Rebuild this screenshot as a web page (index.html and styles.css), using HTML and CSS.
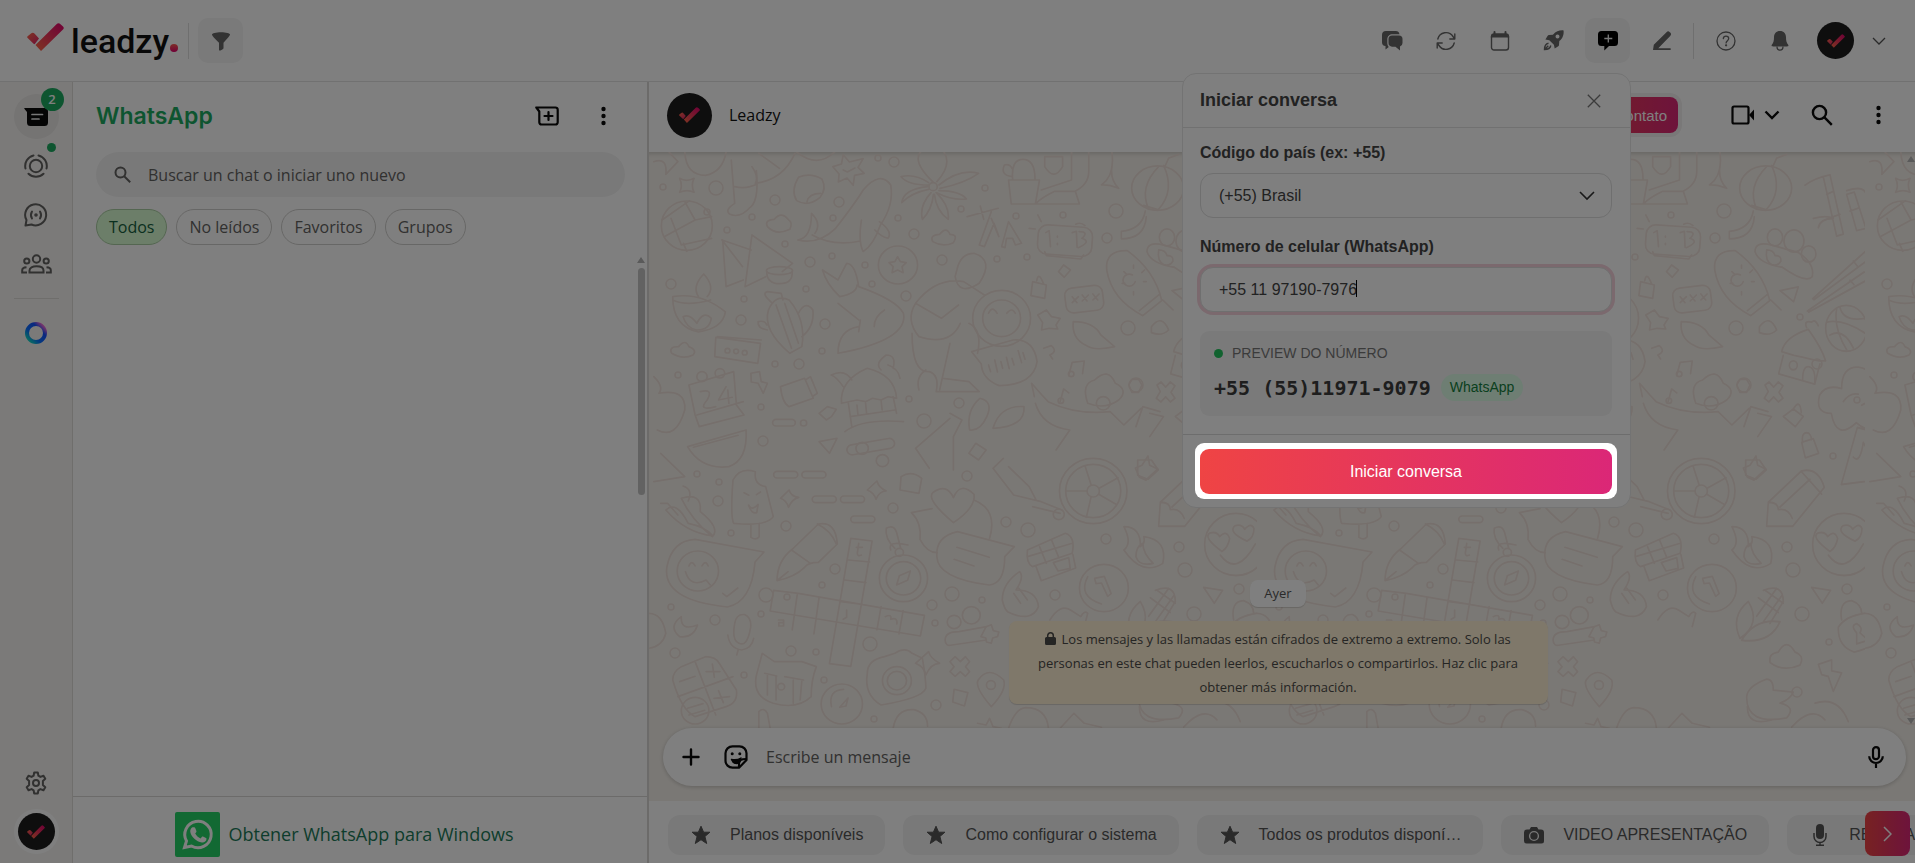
FILE: index.html
```html
<!DOCTYPE html>
<html lang="pt-BR">
<head>
    <meta charset="UTF-8">
    <meta name="viewport" content="width=device-width, initial-scale=1.0">
    <title>Leadzy</title>
    <link rel="stylesheet" href="styles.css">
</head>
<body>
    <!-- Shared shapes -->
    <svg class="defs" aria-hidden="true">
        <defs>
            <linearGradient id="brand" x1="0" y1="1" x2="1" y2="0">
                <stop offset="0" stop-color="#ff6a45"/>
                <stop offset="1" stop-color="#e0006e"/>
            </linearGradient>
            <linearGradient id="brand-short" x1="0" y1="0" x2="1" y2="1">
                <stop offset="0" stop-color="#ff6a45"/>
                <stop offset="1" stop-color="#e0206e"/>
            </linearGradient>
            <linearGradient id="meta" x1="0" y1="1" x2="1" y2="0">
                <stop offset="0.100" stop-color="#12d0c8"/>
                <stop offset="0.350" stop-color="#0a72ff"/>
                <stop offset="0.700" stop-color="#1450ff"/>
                <stop offset="0.900" stop-color="#e868d8"/>
            </linearGradient>
            <symbol id="check" viewBox="0 0 37 28">
                <path fill="url(#brand)" d="M8.500 22 29.500 1.200q2-2 4 0l2.500 2.300q1.500 1.500 0 3L14 28Z"/>
                <path fill="url(#brand-short)" d="M.6 13.200 4 10.400q2-1.400 3.700.3L12 15.600 8 20.800q-.6.800-1.400 0L.4 14.700q-.6-.8.200-1.500Z"/>
            </symbol>
        </defs>
    </svg>

    <header class="topbar">
        <div class="brand">
            <svg class="brand-check" width="37" height="28"><use href="#check"/></svg>
            <span class="brand-name">leadzy</span>
            <span class="brand-dot"></span>
        </div>
        <span class="divider"></span>
        <button class="tool tool-active" aria-label="Filtro">
            <svg width="20" height="20" viewBox="0 0 20 20"><path fill="currentColor" d="M1 3.500C1 2.200 5 1.200 10 1.200s9 1 9 2.300c0 1.200-2 3.300-6.500 8.200V17c0 .6-.3 1-.8 1.300l-2.200 1.200c-.8.400-1.500 0-1.500-.9v-6.900C3 6.800 1 4.700 1 3.500Z"/></svg>
        </button>

        <nav class="tools">
            <button class="tool" aria-label="Conversas">
                <svg width="22" height="20" viewBox="0 0 22 20"><path fill="currentColor" d="M5 0h9.500A4 4 0 0 1 18.500 3.200h-7c-3 0-5.200 2-5.200 5V12c0 1.500.5 3 1.500 4L4.500 18.500V15A3.700 3.700 0 0 1 1 11.300V4a4 4 0 0 1 4-4Z"/><path fill="currentColor" d="M11 4.600h7a3.500 3.500 0 0 1 3.500 3.500V12a3.500 3.500 0 0 1-2.500 3.400V19.500l-4.500-3.800H11A3.500 3.500 0 0 1 7.500 12V8.100A3.500 3.500 0 0 1 11 4.600Z"/></svg>
            </button>
            <button class="tool" aria-label="Sincronizar">
                <svg width="20" height="20" viewBox="0 0 20 20" fill="none" stroke="currentColor" stroke-width="1.400" stroke-linecap="round" stroke-linejoin="round"><path d="M1.800 8A8.400 8.400 0 0 1 17 5.500l1.600 2.300M18.800 3v5h-5M18.200 12A8.400 8.400 0 0 1 3 14.500l-1.600-2.300M1.200 17v-5h5"/></svg>
            </button>
            <button class="tool" aria-label="Agenda">
                <svg width="20" height="20" viewBox="0 0 20 20"><path fill="currentColor" d="M4.500 0a1 1 0 0 1 1 1v1.200h9V1a1 1 0 0 1 2 0v1.200A3 3 0 0 1 19.200 5v1.500H.8V5a3 3 0 0 1 2.700-2.800V1a1 1 0 0 1 1-1Z"/><rect x="1.500" y="4" width="17" height="15" rx="2.500" fill="none" stroke="currentColor" stroke-width="1.400"/></svg>
            </button>
            <button class="tool" aria-label="Campanhas">
                <svg width="21" height="21" viewBox="0 0 21 21"><path fill="currentColor" fill-rule="evenodd" d="M20.600.4c.3 4-.5 7.300-4.300 10.700l-.3 4c0 .5-.3.900-.7 1.200l-3.600 2.300-.8-3.900-4.600-4.500-3.900-.7 2.300-3.700c.3-.4.700-.7 1.200-.7l4-.3C13.300.9 16.600.1 20.600.4ZM14.500 4.500a2 2 0 1 0 0 4 2 2 0 0 0 0-4Z"/><path fill="none" stroke="currentColor" stroke-width="1.400" d="M5.500 13.200c-3 .6-4 3-4 6.300 3.300 0 5.700-1 6.300-4M1.500 19.500l3.800-3.800"/></svg>
            </button>
            <button class="tool tool-active tool-dark" aria-label="Iniciar conversa" aria-expanded="true">
                <svg width="22" height="20" viewBox="0 0 22 20"><path fill="currentColor" d="M4.500 0h13A3.500 3.500 0 0 1 21 3.500v8a3.500 3.500 0 0 1-3.500 3.500H12l-4.700 4.500V15H4.500A3.500 3.500 0 0 1 1 11.500v-8A3.500 3.500 0 0 1 4.500 0Z"/><path stroke="#f2f2f2" stroke-width="1.300" d="M11.300 3.500v8M7.300 7.500h8"/></svg>
            </button>
            <button class="tool" aria-label="Assinatura">
                <svg width="20" height="20" viewBox="0 0 20 20"><path fill="currentColor" d="m1 19 .8-5.200L14.500 1.200a2.300 2.300 0 0 1 3.300 0l.4.400a2.300 2.300 0 0 1 0 3.300L6.300 17.200H18a.9.9 0 0 1 0 1.800Z"/></svg>
            </button>
            <span class="divider"></span>
            <button class="tool" aria-label="Ajuda">
                <svg width="20" height="20" viewBox="0 0 20 20" fill="none" stroke="currentColor" stroke-width="1.300"><circle cx="10" cy="10" r="9"/><path stroke-linecap="round" d="M7.300 7.600C7.400 6 8.600 5.200 10 5.200c1.500 0 2.700.9 2.700 2.400 0 2-2.600 2.100-2.600 4.300"/><circle cx="10.100" cy="14.300" r=".5" fill="currentColor"/></svg>
            </button>
            <button class="tool" aria-label="Notificações">
                <svg width="20" height="20" viewBox="0 0 20 20"><path fill="currentColor" d="M10 0c3.800 0 6 2.700 6 6.200 0 4 .7 5.700 2 7.300.9 1.100.3 1.900-1 1.900H3c-1.300 0-1.900-.8-1-1.900 1.300-1.600 2-3.300 2-7.300C4 2.700 6.200 0 10 0Z"/><path fill="none" stroke="currentColor" stroke-width="1.300" d="M7 15.500c0 2.200 1.200 3.700 3 3.700s3-1.500 3-3.700"/></svg>
            </button>
            <button class="account" aria-label="Conta">
                <span class="avatar avatar-sm"><svg width="18" height="14"><use href="#check"/></svg></span>
                <svg width="14" height="8" viewBox="0 0 14 8" fill="none" stroke="currentColor" stroke-width="1.300"><path d="m1 1 6 6 6-6"/></svg>
            </button>
        </nav>
    </header>

    <div class="app">
        <nav class="rail">
            <button class="rail-btn rail-current" aria-label="Chats">
                <svg width="24" height="20" viewBox="0 0 24 20"><path fill="#0a0a0a" d="M.8 1h19.700A3.500 3.500 0 0 1 24 4.500v11a3.500 3.500 0 0 1-3.500 3.500h-14A3.500 3.500 0 0 1 3 15.500V5L.3 1.800C0 1.400.3 1 .8 1Z"/><path stroke="#f0f0f0" stroke-width="1.700" stroke-linecap="round" d="M8 7.500h10.500M8 12h7"/></svg>
                <span class="badge">2</span>
            </button>
            <button class="rail-btn" aria-label="Estados">
                <svg width="24" height="24" viewBox="0 0 24 24" fill="none" stroke="currentColor" stroke-width="2" stroke-linecap="round"><circle cx="12" cy="12" r="6.200"/><path d="M9.500 1.500A10.800 10.800 0 0 0 1.500 14.500M14.500 1.500A10.800 10.800 0 0 1 22.500 14.500M4.500 19.800a10.800 10.800 0 0 0 15 0"/></svg>
                <span class="dot"></span>
            </button>
            <button class="rail-btn" aria-label="Canales">
                <svg width="24" height="24" viewBox="0 0 24 24" fill="none" stroke="currentColor" stroke-width="2" stroke-linecap="round" stroke-linejoin="round"><path d="M1.500 22.500 2.500 17A10.500 10.500 0 1 1 7.500 21.500Z"/><circle cx="12" cy="12" r=".8" fill="currentColor"/><path d="M8 8.500q-2.200 3.500 0 7M16 8.500q2.200 3.500 0 7"/></svg>
            </button>
            <button class="rail-btn" aria-label="Comunidades">
                <svg width="31" height="20" viewBox="0 0 31 20" fill="none" stroke="currentColor" stroke-width="2"><circle cx="15.500" cy="5" r="3.700"/><circle cx="5.800" cy="7" r="2.600"/><circle cx="25.200" cy="7" r="2.600"/><path d="M8.500 18.500v-2c0-2.800 3-4.200 7-4.200s7 1.400 7 4.200v2ZM6 18.500H1.200v-2.300c0-1.600 1.300-2.700 4.300-2.900M25 18.500h4.800v-2.300c0-1.600-1.300-2.700-4.300-2.900"/></svg>
            </button>
            <hr class="rail-sep">
            <button class="rail-btn" aria-label="Meta AI">
                <svg width="24" height="24" viewBox="0 0 24 24"><circle cx="12" cy="12" r="9" fill="none" stroke="url(#meta)" stroke-width="4"/></svg>
            </button>
            <button class="rail-btn rail-end" aria-label="Ajustes">
                <svg width="24" height="24" viewBox="0 0 24 24" fill="none" stroke="currentColor" stroke-width="2" stroke-linejoin="round"><circle cx="12" cy="12" r="3"/><path d="M10.200 1.500h3.600l.6 3.200 2 1.200 3.100-1.200 1.800 3.100-2.400 2.200v4l2.400 2.200-1.800 3.100-3.100-1.200-2 1.200-.6 3.200h-3.600l-.6-3.200-2-1.200-3.100 1.200-1.800-3.100L5.100 14v-4L2.700 7.800l1.800-3.100 3.100 1.200 2-1.200Z"/></svg>
            </button>
            <button class="rail-btn rail-me" aria-label="Tú">
                <span class="avatar avatar-sm"><svg width="18" height="14"><use href="#check"/></svg></span>
            </button>
        </nav>

        <aside class="panel">
            <div class="panel-head">
                <h1>WhatsApp</h1>
                <button class="icon-btn" aria-label="Nuevo chat">
                    <svg width="24" height="20" viewBox="0 0 24 20" fill="none" stroke="currentColor" stroke-width="2.200" stroke-linecap="round"><path stroke-linejoin="round" d="M1.300 1.500h19.200a2.200 2.200 0 0 1 2.200 2.200v12.600a2.200 2.200 0 0 1-2.200 2.200h-14a2.200 2.200 0 0 1-2.200-2.200V5.500Z"/><path d="M13.500 6v8M9.500 10h8"/></svg>
                </button>
                <button class="icon-btn" aria-label="Menú">
                    <svg width="5" height="20" viewBox="0 0 5 20" fill="currentColor"><circle cx="2.500" cy="3" r="2.200"/><circle cx="2.500" cy="10" r="2.200"/><circle cx="2.500" cy="17" r="2.200"/></svg>
                </button>
            </div>
            <div class="search">
                <svg width="17" height="17" viewBox="0 0 17 17" fill="none" stroke="currentColor" stroke-width="2"><circle cx="6.500" cy="6.500" r="5"/><path d="m10.200 10.200 6 6"/></svg>
                <input type="text" aria-label="Buscar" placeholder="Buscar un chat o iniciar uno nuevo">
            </div>
            <div class="filters">
                <button class="chip chip-on">Todos</button>
                <button class="chip">No leídos</button>
                <button class="chip">Favoritos</button>
                <button class="chip">Grupos</button>
            </div>
            <div class="chat-list">
                <span class="arrow-up"></span>
                <span class="thumb"></span>
            </div>
            <a class="get-app" href="#">
                <svg width="45" height="45" viewBox="0 0 45 45"><rect width="45" height="45" rx="2" fill="#25d366"/><path fill="none" stroke="#fff" stroke-width="3" d="M9.500 35.500 11.500 29A13.200 13.200 0 1 1 16.500 34Z"/><path fill="#fff" d="M17.500 15.300h1.700c.5 0 .8.200 1 .7l1.200 3c.2.500 0 .8-.2 1.200l-1 1.300c1.200 2.300 3 3.900 5.400 5l1.400-1.700c.3-.4.600-.5 1-.3l3 1.500c.5.200.6.500.5 1-.3 2.300-2.200 3.700-4.500 3.500-5.800-.8-10.600-5.300-11.700-10.400-.3-2 .6-4 2.200-4.800Z"/></svg>
                Obtener WhatsApp para Windows
            </a>
        </aside>

        <main class="chat">
            <div class="chat-head">
                <span class="avatar"><svg width="21" height="16"><use href="#check"/></svg></span>
                <span class="chat-name">Leadzy</span>
                <button class="contact">Novo contato</button>
                <button class="icon-btn video" aria-label="Videollamada">
                    <svg width="24" height="20" viewBox="0 0 24 20"><rect x="1.500" y="1.500" width="16" height="17" rx="1.500" fill="none" stroke="currentColor" stroke-width="2.200"/><path fill="currentColor" d="m18 10 5-5.500v11Z"/></svg>
                    <svg width="16" height="10" viewBox="0 0 16 10" fill="none" stroke="currentColor" stroke-width="2.400"><path d="m1.500 1.500 6.500 6.500 6.500-6.500"/></svg>
                </button>
                <button class="icon-btn" aria-label="Buscar">
                    <svg width="22" height="22" viewBox="0 0 22 22" fill="none" stroke="currentColor" stroke-width="2.400"><circle cx="8.500" cy="8.500" r="6.600"/><path d="m13.200 13.200 7.600 7.600"/></svg>
                </button>
                <button class="icon-btn" aria-label="Menú">
                    <svg width="5" height="20" viewBox="0 0 5 20" fill="currentColor"><circle cx="2.500" cy="3" r="2.200"/><circle cx="2.500" cy="10" r="2.200"/><circle cx="2.500" cy="17" r="2.200"/></svg>
                </button>
            </div>

            <div class="thread">
                <!-- Wallpaper -->
                <svg class="wallpaper" aria-hidden="true">
                    <defs>
                        <pattern id="doodles" width="608" height="800" patternUnits="userSpaceOnUse">
                            <g fill="none" stroke="#ecdfd8" stroke-width="5" stroke-linejoin="round" stroke-linecap="round">
                                <g transform="translate(-9 -82) scale(.3444 .3333)">
                                    <circle cx="136" cy="467" r="74"/><path d="m64 450 80-58M70 500l90-50 48-10M90 445l30 80 88-20M126 520l10 24M160 450l-30-55"/>
                                    <path d="M115 325q20 12 42 0-10 20 0 42-20-10-42 0 10-20 0-42Z"/>
                                    <path d="M130 246q4 70 60 70 50-10 60-70M265 270l10 130q-30 20-15 32 30 15 60-20 26-20 18-110M275 350q35 8 65-8M325 290q20 30 10 50 80-10 115-90M345 250l60 45M455 246q60 50 110 0M40 275q40-15 35 38l35-38-25-28"/>
                                    <path d="m560 290 25-8 5-28 18 22 40-10-15 26 18 18-28 6-4 30-18-22-25 12 2-24-18-22ZM590 300l12 6 22-12"/>
                                    <path d="M460 322q35-15 68 5 15 30-5 55-35 30-68 10-18-30 5-70ZM485 395q5-25 40-25"/>
                                    <path d="M458 510q60 15 110-35 60-80 80-115 50-60 80-15 10 60-30 120-20 60-50 80-15-30-5-95M458 510q40-5 40-80 30 30 10 60M500 495q60 35 140 18M695 455q40 30 25 50-20-5-38-25"/>
                                    <path d="M850 335q-60-60-35-90M862 335q45-50 20-90M868 345q60-50 115-35-40 30-112 45M868 362q60 0 80 25-40 5-85-18M860 368q40 40 35 80-35-25-40-75M845 368q-35 40-25 80 28-30 32-75M838 358q-50 10-78 40 5-40 75-48M838 345q-60 0-80-25 40-10 80 18"/><circle cx="851" cy="350" r="12"/>
                                    <path d="M1070 330h90l-12 72h-70ZM1082 328q-5-60 30-60 35 0 35 60M1080 320q-35-5-22-35 15-5 22 10M1148 402h128l-12-38h-60q-40 20-56 38M1175 260h52v30q-25 45-52 0ZM1165 360l88-30V246M1263 364q40-20 40-60v-58"/>
                                    <path d="M1340 345q40-30 30-100M1370 290q-5 40 20 65-30-12-50-10"/>
                                    <path d="M370 470q-10-20 20-22 20-25 40 0 15 10 5 30-40 20-65-8ZM850 515q-10-20 20-22 20-25 30 0 25 0 10 25-30 15-60-3ZM92 850q-10-20 20-20 20-25 30 0 25 10 12 25-30 15-62-5Z"/>
                                    <path d="m950 440 90-25M988 408l10 40M1020 425l-35 100 15 5 28-70 14 40-22-55M1050 530l20-75 38 65-18 5-8-20h-18l-4 28Z"/>
                                    <rect x="1155" y="468" width="158" height="88" rx="28" transform="rotate(4 1233 512)"/><path d="m1175 545 5 12 100 10 8-12M1265 463q15-8 27 4M1155 435l10 20M1130 475l18 2M1178 488l10-6 4 48M1255 488l12-4 2 48M1275 485q30 0 8 20 30 10-10 28M1212 498v4M1212 520v4"/>
                                    <path d="m238 510 85 30M240 510l10 140 50-20M325 495l-20 155 60-30M325 495l118 85-30 25M238 510l60 80"/><ellipse cx="405" cy="602" rx="38" ry="12"/><path d="M368 605q0 36 38 36 38 0 36-36"/>
                                    <circle cx="749" cy="585" r="57"/><path d="m748 560 8 15 17 3-12 12 3 18-16-8-16 8 3-18-12-12 17-3Z"/>
                                    <path d="M95 680q0 90 75 106 70-10 78-60-70-60-153-46ZM170 680q-20-30 15-68 35 40 10 68M125 740q20-10 40 20 20-40 42-15-5 35-42 35-30-5-40-40ZM95 690q40 20 110 0"/>
                                    <path d="M435 850q-80-70-62-130 20-50 60-30 50 60 37 140ZM370 780q-30-5-27-25 20-5 25 10M460 730q20-40 42-10 5 50-32 80M385 700q-35-30-15-35l40 5 5 20M395 705l45 130M420 700l40 120"/>
                                    <path d="M530 600l45 30 25-50q25 0 35 70 110 40 130 80 15 80-190 120 0-70 60-80M530 600q10 40 50 80 50-10 50-35M575 700l60 50M640 750l-5 35M680 770q0-30 30-50"/>
                                    <path d="M800 700q60-80 140-65l60 40M800 700q-30 50 10 100 90 30 120-40M800 700l75 45 50-40M920 600q10-50 50-50 60 20 15 90-60 40-70-20ZM790 790q0 120 50 115 30 10 20 60h125l-30-30-75-10M900 820l-30 140M810 960q-10-40 20-60M955 760q40 20 25 90"/>
                                    <circle cx="1050" cy="745" r="84"/><circle cx="1050" cy="745" r="55"/><path d="M1012 730q10-25 25 0M1065 730q15-20 25 0"/>
                                    <path d="M963 845l120-35q60-5 70 65-10 70-110 72-50-20-52-65ZM1012 885l6 20M1030 870l8 36M1048 875l5 20M1064 862l8 34M1080 865l6 20M1098 842l10 36M1112 848l6 20"/>
                                    <rect x="1235" y="650" width="110" height="75" rx="22" transform="rotate(-7 1290 688)"/><path d="m1255 680 14 18m4-18-18 18M1284 675l14 18m4-18-18 18M1315 672l14 18m4-18-18 18"/>
                                    <path d="M1355 600q-5-60 60-58 80 60 100 150l-55 45Q1370 690 1355 600ZM1450 722l60-50M1518 690l30 30M1430 615a18 18 0 1 0 8 20M1433 595v-10M1465 600l-8 8M1405 605l8 8M1470 635h-8M1400 640h8M1433 665v10"/>
                                    <path d="m1140 635 40 10-5 40-40-8ZM1152 632q5-30 20 10M1155 735l25-15 15 20 25 5-12 20 5 12-25-2-22 5 3-22Z"/>
                                    <path d="M220 802l130 18-8 60-125-20ZM225 800l127 10"/><circle cx="254" cy="842" r="7"/><circle cx="279" cy="844" r="7"/><circle cx="304" cy="848" r="7"/>
                                    <path d="m142 945 130-40 8 100 22 30-130 35-12-35ZM165 1035l135-40M175 965q40-10 20 25-30 35 25 20M250 950l-22 40 40-8M255 960l3 40"/><circle cx="180" cy="920" r="15"/><circle cx="232" cy="910" r="14"/>
                                    <path d="m322 910 25-5 5 30 18 5-12 30-15-30-20-4Z"/>
                                    <path d="m408 950 70-25 25 60-70 25q-20-10-25-60ZM480 930l15-10 20 50-12 8"/>
                                    <path d="m585 1000q-5-70 75-105 80 20 85 90l-25-5-20 10-25-5-20 10-25-5ZM605 1000l10 70M735 980l10 50M610 1040l130-20M630 1005l3 30M655 1000l3 30M700 990l3 30M595 1085q50-40 170-30M590 950q-20-30-35-35 40-20 60 15M700 900q-20-20 15-45 30 0 20 40M720 885q30 10 35 40"/>
                                    <path d="m520 1030 24-20 26 8-14 22-15 10ZM1215 605l15-20 20 15-18 22ZM955 1150l20-30 30 20-22 30Z"/>
                                    <rect x="385" y="1048" width="66" height="20" rx="10"/><circle cx="475" cy="1059" r="9"/>
                                    <path d="M138 1130l170-50q5 90-50 110-80 10-120-60ZM155 1132l130-36"/>
                                    <path d="m1258 755q60 0 80 40l40 35q-60 15-85-5-40-20-35-70ZM1485 770q30-40 50 10-20 20-50 8ZM1172 835l22-8q20 18-4 28l8 12"/>
                                    <path d="M1245 915l10-38 35-4-5 38M1220 995l10-38 15 12"/><circle cx="1252" cy="912" r="8"/><circle cx="1222" cy="992" r="8"/>
                                    <path d="M957 1080q-10-60 30-95 40 10 20 55-20 45-50 40ZM1025 1075q20-70 90-65 5 60-90 65Z"/>
                                    <path d="M1145 980l-8-40 30 35 18 20q80 40 180 30l40 40 50-50M1148 1000q20 70 100 80l-40 60M1300 1000q-20-60 20-70 40-40 60 10 40 20 10 50-40 30-90 10M1440 1070l20-60 50 15M1480 1100l40-60-40-10"/><circle cx="1345" cy="1000" r="20"/>
                                    <path d="M40 920q30 30 15 50 80-15 75 50-25 90-80 60"/>
                                    <path d="m520 1115 52-10-22 45Z"/><rect x="600" y="1115" width="140" height="30" rx="15" transform="rotate(-10 670 1130)"/><circle cx="645" cy="1135" r="18"/><circle cx="704" cy="1172" r="18"/><path d="M900 1030l35 20-25 50v100M900 1045l-100 90 40 60"/>
                                </g>
                                <g transform="translate(-9 308) scale(.3444 .3333)">
                                    <path d="M40 65l90-15L60-20M270 60q20-40 65-25-5 40 30 45l22 90q-20 30-115 20-10-20-2-130ZM322 192v40q15 10 24-2v-40M302 98l14 8M350 96l-12 8M315 135q10 20 28-2l-4 25q-15 5-24-23Z"/>
                                    <path d="M120 115q60-20 55 40 60 50 35 75-60-50-90-115ZM75 150q30-30 65 40 50 10 72 38-80-10-137-78ZM60 130h20l30 35M125 78q30 10 15 45"/>
                                    <rect x="388" y="34" width="70" height="20" rx="10"/><rect x="470" y="34" width="70" height="20" rx="10"/><rect x="500" y="108" width="70" height="20" rx="10"/><rect x="582" y="108" width="70" height="20" rx="10"/><rect x="612" y="168" width="70" height="20" rx="10"/>
                                    <path d="m408 115 25-25q5 20 28 22-20 5-30 30-5-20-23-27ZM660 90l28-27q5 20 27 30-20 0-30 25-5-20-25-28ZM800 610l38-35q5 20 32 35-25 0-40 35-5-25-30-35Z"/>
                                    <path d="M910 188q-80-70-60-90 40-30 60 15 20-50 60-10 5 40-60 85ZM970 120q70 30 45 115M788 158l60-12M788 158q30 30 25 80 20 40 50 40"/>
                                    <path d="M862 290q-5-60 60-75l165 45-28 30q0 80-45 85-150-20-152-85ZM920 262l94 30M912 298l58 20"/>
                                    <path d="M160 238l200 38-26 30q-10 120-80 135-190-20-176-120 15-80 82-83Z"/><circle cx="168" cy="333" r="60"/><path d="M142 318q8-20 18 0M180 318q10-20 18 0M132 335q15 50 60 25l12 15M240 400l12 10 32-26"/>
                                    <path d="M398 362q0-60 45-95l75-75q50-10 55 60l-55 55q-30 0-40 15-30 30-80 40ZM440 270l55 40M400 360l30-25M515 192q40 20 55 60"/>
                                    <path d="M612 235l62 8-62 376-62-8ZM460 400l366 66-12 62-436-75 10-62ZM605 300l62 6M594 360l62 8M584 425l62 8M457 400l-15 110M520 412l-15 110M700 440l-12 70M764 452l-12 70M635 250l-4 30q0 10 12 5M628 262h18M402 480h15v18h-14v-10h14M600 450v22l-10 6M712 470q20-10 16 8 20-8 18 14"/>
                                    <circle cx="765" cy="355" r="70"/><circle cx="765" cy="355" r="50"/><circle cx="753" cy="277" r="12"/><path d="m745 375 8-28 32-14-8 28ZM728 270q-10-30 50-15M740 265q-30-30-25-60 25-15 32 20l10 40"/>
                                    <path d="m758 50q30-20 60 5l-8 45-55-10ZM1125 270l110-50q30 10 20 60l-115 40q-20-10-15-50ZM1150 320l15 42 100-38-8-40M1125 290l130-40M1160 260l20 50M1195 240l20 50M1200 308l45-15 4 32-35 8Z"/>
                                    <circle cx="1316" cy="93" r="98"/><circle cx="1316" cy="93" r="80"/><circle cx="1316" cy="93" r="18"/><path d="m1310 75-18-58M1333 85l55-32M1332 103l50 30M1310 110l-14 62M1298 93h-60M1025 25l60 80 80 20 60 25M1025 25l30-30M1070 20l60 60 20 40M1140 140l80 20"/><circle cx="1216" cy="163" r="16"/>
                                    <path d="M1405 270q25-20 0-70 50 0 48 60 15-10 10-30 70 10 55 80-60 40-113-40ZM1440 290q0-30 20-40 0 30 30 60-40 10-50-20ZM1445 0l40 0 20 30-30 28-30-12Z"/>
                                    <circle cx="1347" cy="384" r="71"/><path d="M1320 355l28-6 20 52-10 8-18-40-16 2ZM1300 350q-30 60 40 82"/>
                                    <path d="M1052 420q0-50 50-85 15 15-10 55 60 0 65 50-20 50-90 15-10-10-15-35ZM1085 400l20 30M1100 385l25 35M1190 480q30-50 60-30l30 20q10-20 20-10l-10 40"/>
                                    <path d="M120 470q-40 30-5 60 40 5 52-35-50 20-47-25ZM275 490q5-30 30-26 20 10 16 40-10 60-35 45-20-10-11-59ZM255 525q5 40 40 45 30-5 35-35M285 570l-4 15M25 460q40 0 50 60-10 40-50 45"/>
                                    <path d="M95 660q0-25 25-40l70-30q30 0 40 20l50 80q5 40-30 50l-90 30q-40-20-65-110ZM160 605l60 160M110 710l160-60M115 665l45-16M192 635h40M210 612l6 40M215 715l45-5M228 692l14 36"/><circle cx="160" cy="752" r="40"/><path d="m138 745 45-14M142 765l46-14"/>
                                    <path d="M355 580l35 25h80l42 15q-15 40-15 90-40 40-110 20-60-20-50-80ZM362 640l35 8M420 650l55 10M370 645v60M395 650v70M445 660v70M470 660l-5 60"/><circle cx="410" cy="680" r="10"/>
                                    <circle cx="586" cy="732" r="60"/><path d="M556 740q-10-50 35-52M580 742l24-28-6 24Z"/>
                                    <path d="M660 640q0-40 50-50l30-10q30-20 50 0l30 15q10 60 10 90-10 30-130 50-50-30-40-95Z"/><circle cx="746" cy="662" r="42"/><circle cx="746" cy="662" r="28"/>
                                    <path d="m900 605 15-15 15 15 15-15 12 15-12 15 12 15-12 14-15-14-15 14-15-14 12-15ZM886 540q0-25 40-25l80-15M886 540q0 20 20 15l100-15"/><circle cx="912" cy="486" r="20"/><circle cx="962" cy="466" r="26"/><path d="M1005 500l15-6 6 18 16 4-4 14-14 4-4 16-14-4-2-12-14-4Z"/>
                                    <path d="M1020 740q-50-60-38-80 30-45 74 0 10 30-36 80ZM912 688l40 10-10 40-34-12ZM735 805q10-60 60-56 40 10 40 50M980 790l25 5 10-20 10 25 25 5M345 805v-50q15-15 25 5l8 45M1070 805q20-60 50-62 60 0 66 62M1220 805l40-45 30 30 50 12M1450 740q0 60 70 40"/><circle cx="1019" cy="675" r="13"/>
                                </g>
                                <g transform="translate(363 -2) scale(.3333 .37)">
                                    <ellipse cx="437" cy="103" rx="78" ry="60"/><path d="M410 160q-30-60 30-115M440 160q50-50 15-118M395 150l45 12M400 165q-10 50-72 55v20q70 0 75-60M460 42l10-20 30-10"/>
                                    <path d="M555 95q30-20 75-28l40 160-20 6-40-160M620 120l20-8M640 180l20-6M580 185q40-10 60 0-40 0-45 25M680 120l30 98 28-6-35-98ZM680 110q50-15 58 8M690 165l25-8"/>
                                    <circle cx="465" cy="236" r="23"/><circle cx="522" cy="246" r="30"/><circle cx="566" cy="281" r="22"/><path d="M405 275q0-30 50-18l80 20q50 30 42 65-20 20-90-25-70-10-82-42ZM440 270q20 0 25 15 20 0 18 15-10 15-28 10-20-10-15-40Z"/>
                                    <path d="M578 402 735 275q15-5 20 15L582 405M562 435l170-105q20 0 22 15L566 438M700 300l12 14M690 352l12 12M480 380l55-10-14 40Z"/>
                                    <circle cx="679" cy="482" r="62"/><path d="M620 465q50-10 115 30M650 430q-10 50 30 110M630 500q40-20 70 35M660 425q10 40 75 30"/>
                                    <path d="M485 545q10-40 80-60 40 50 52 85l-20 0-25-5-25-5-25-5ZM490 555l-14 50 108 28 16-55M560 480q-10-20 15-15 10-10 20 10"/><circle cx="520" cy="582" r="12"/><path d="M548 622q0-40 20-36 20 5 16 46"/>
                                    <path d="M665 645q0-60 50-58 50 5 50 60 70-20 74 30-5 45-60 40-20 60-70 20-60 50-75-25-50 0-35-50 20-30 66-17ZM712 750l50 12 76 122-174 20ZM670 680q20-25 45-20M725 690q30-20 50 25M700 830q20 20 30-40 20 40 50 30M765 760v30"/>
                                    <path d="m435 635 12-8 14 14 14-14 14 10-12 18 12 16-14 10-14-14-14 14-14-10 12-18ZM490 720l30-20 30 20-24 28ZM520 700q20-30 24 10M545 790l35-10 16 40-40 12ZM548 790q-5-30 18-25 10 10 8 18M350 635l10-15h20l10 15-10 20h-20ZM370 860l20-8 18-25 5 25 24 10-35 30-20-8Z"/>
                                    <path d="M440 1017l5-65 100-85q50-10 68 45l-95 105ZM445 952q30 0 30 20 30-5 42 24M545 870l60 60M480 965l90-75"/>
                                    <ellipse cx="672" cy="1066" rx="94" ry="84"/><path d="M630 1085q-60-40-35-50 20-5 28 10 20-20 30 5-5 25-23 35ZM705 1057q-60-25-35-42 20-5 28 10 20-20 28-2 0 25-21 34ZM625 1095q50 60 105-30M575 1182l57 8-25 35Z"/>
                                    <path d="M655 1290q20-30 80-38 40 20 46 60-10 30-78 45-50-15-48-67ZM665 1270q-10-50 30-52 30 10 30 34M710 1280q20 10 10 25l25 20-35 10v-30q-20-20 0-25"/>
                                    <path d="M360 1320q-30-60 25-100 40 60-25 100ZM365 1325q40-60 115-50-30 60-115 50ZM430 1190q60-20 60 30l-40 60M415 1210l60 40M435 1190l55 35M410 1260l60-75M430 1275l55-70"/>
                                    <path d="M450 1385q-5-25 25-28 25-40 50 0 30 10 15 35-50 20-90-7ZM595 1390l40-12v30l30 5-25 50-15-40-20-5ZM380 1480q0-30 60-50 20 0 20 30l60 5q-10 20-40 30 50 10 20 40-120 20-120-55ZM515 1560q60-60 100-20M585 1495q70-20 100 50"/>
                                </g>
                                <g stroke-width="1.600">
                                    <circle cx="67" cy="36" r="7"/><circle cx="14" cy="35" r="3"/><circle cx="126" cy="48" r="5"/><circle cx="190" cy="50" r="5"/><circle cx="245" cy="10" r="5"/><circle cx="229" cy="6" r="3"/><circle cx="336" cy="36" r="3"/><circle cx="249" cy="66" r="3"/><circle cx="265" cy="82" r="5"/><circle cx="467" cy="59" r="7"/><circle cx="458" cy="86" r="5"/><circle cx="414" cy="63" r="3"/><circle cx="293" cy="108" r="5"/><circle cx="161" cy="110" r="5"/><circle cx="22" cy="132" r="5"/><circle cx="92" cy="168" r="5"/><circle cx="176" cy="172" r="5"/><circle cx="257" cy="144" r="5"/><circle cx="479" cy="176" r="7"/><circle cx="150" cy="212" r="5"/><circle cx="487" cy="233" r="7"/><circle cx="310" cy="251" r="5"/><circle cx="275" cy="269" r="7"/><circle cx="114" cy="289" r="5"/><circle cx="69" cy="349" r="5"/><circle cx="137" cy="374" r="5"/><circle cx="244" cy="356" r="5"/><circle cx="318" cy="324" r="5"/><circle cx="357" cy="370" r="5"/><circle cx="379" cy="378" r="7"/><circle cx="186" cy="417" r="5"/><circle cx="117" cy="443" r="7"/><circle cx="303" cy="442" r="7"/><circle cx="283" cy="453" r="5"/><circle cx="66" cy="468" r="5"/><circle cx="221" cy="492" r="7"/><circle cx="142" cy="499" r="5"/><circle cx="26" cy="501" r="5"/><circle cx="287" cy="553" r="5"/><circle cx="457" cy="387" r="5"/><circle cx="406" cy="443" r="5"/><circle cx="545" cy="462" r="7"/><circle cx="530" cy="395" r="5"/><circle cx="536" cy="418" r="7"/><circle cx="590" cy="437" r="5"/><circle cx="58" cy="60" r="3"/><circle cx="78" cy="78" r="3"/><circle cx="103" cy="65" r="3"/><circle cx="136" cy="92" r="3"/><circle cx="184" cy="66" r="3"/><circle cx="312" cy="57" r="3"/><circle cx="367" cy="64" r="3"/><circle cx="183" cy="104" r="3"/><circle cx="216" cy="113" r="3"/><circle cx="348" cy="107" r="3"/><circle cx="378" cy="105" r="3"/><circle cx="223" cy="132" r="3"/><circle cx="157" cy="137" r="3"/><circle cx="95" cy="147" r="3"/><circle cx="173" cy="199" r="3"/><circle cx="29" cy="223" r="3"/><circle cx="126" cy="212" r="3"/><circle cx="260" cy="247" r="3"/><circle cx="112" cy="255" r="3"/><circle cx="48" cy="322" r="3"/><circle cx="70" cy="330" r="3"/><circle cx="82" cy="381" r="3"/><circle cx="173" cy="433" r="3"/><circle cx="138" cy="445" r="3"/><circle cx="112" cy="462" r="3"/><circle cx="22" cy="455" r="3"/><circle cx="167" cy="500" r="3"/><circle cx="95" cy="523" r="3"/><circle cx="175" cy="528" r="3"/><circle cx="225" cy="567" r="3"/><circle cx="286" cy="471" r="3"/><circle cx="333" cy="448" r="3"/><circle cx="543" cy="165" r="3"/><circle cx="560" cy="212" r="5"/><circle cx="576" cy="304" r="3"/><circle cx="600" cy="248" r="3"/><circle cx="540" cy="540" r="5"/><circle cx="572" cy="490" r="3"/>
                                </g>
                            </g>
                        </pattern>
                    </defs>
                    <rect width="100%" height="100%" fill="url(#doodles)"/>
                </svg>

                <div class="messages">
                    <span class="arrow-up"></span>
                    <span class="day">Ayer</span>
                    <p class="notice"><svg width="11" height="13" viewBox="0 0 11 13"><path fill="currentColor" d="M1.500 5h8A1.500 1.500 0 0 1 11 6.500v5A1.500 1.500 0 0 1 9.500 13h-8A1.500 1.500 0 0 1 0 11.500v-5A1.500 1.500 0 0 1 1.500 5Z"/><path fill="none" stroke="currentColor" stroke-width="1.500" d="M2.700 5.500V3.600a2.800 2.800 0 0 1 5.600 0v1.900"/></svg> Los mensajes y las llamadas están cifrados de extremo a extremo. Solo las personas en este chat pueden leerlos, escucharlos o compartirlos. Haz clic para obtener más información.</p>
                    <span class="arrow-down"></span>
                </div>

                <div class="composer">
                    <button class="icon-btn" aria-label="Adjuntar">
                        <svg width="18" height="18" viewBox="0 0 18 18" stroke="currentColor" stroke-width="2.400" stroke-linecap="round"><path d="M9 1.500v15M1.500 9h15"/></svg>
                    </button>
                    <button class="icon-btn" aria-label="Stickers">
                        <svg width="24" height="24" viewBox="0 0 24 24" fill="none" stroke="currentColor" stroke-width="2.200" stroke-linejoin="round"><path d="M8.500 1.300h7a7 7 0 0 1 7 7V15L15 22.700H8.500a7 7 0 0 1-7-7V8.300a7 7 0 0 1 7-7Z"/><path d="M15 22v-3.500q0-4.500 7-4.500"/><path fill="currentColor" stroke-width="1.400" d="M7.500 14.500q6 1 9.500-1.500-1 5.500-4.500 5.500-3.500 0-5-4Z"/><circle cx="8.200" cy="8.700" r="1.500" fill="currentColor" stroke="none"/><circle cx="15.800" cy="8.700" r="1.500" fill="currentColor" stroke="none"/></svg>
                    </button>
                    <input type="text" aria-label="Mensaje" placeholder="Escribe un mensaje">
                    <button class="icon-btn" aria-label="Audio">
                        <svg width="16" height="22" viewBox="0 0 16 22" fill="none" stroke="currentColor" stroke-width="2.200"><rect x="5" y="1.200" width="6" height="12" rx="3"/><path d="M1.200 10.200a6.800 6.800 0 0 0 13.600 0M8 17v5"/></svg>
                    </button>
                </div>
            </div>

            <div class="quick">
                <button class="quick-btn">
                    <svg width="20" height="20" viewBox="0 0 20 20"><path fill="currentColor" stroke="currentColor" stroke-linejoin="round" d="m10 1.200 2.600 6h6.300l-5 4.300 1.800 7L10 14.700l-5.700 3.800 1.800-7-5-4.300h6.300Z"/></svg>
                    Planos disponíveis
                </button>
                <button class="quick-btn">
                    <svg width="20" height="20" viewBox="0 0 20 20"><path fill="currentColor" stroke="currentColor" stroke-linejoin="round" d="m10 1.200 2.600 6h6.300l-5 4.300 1.800 7L10 14.700l-5.700 3.800 1.800-7-5-4.300h6.300Z"/></svg>
                    Como configurar o sistema
                </button>
                <button class="quick-btn">
                    <svg width="20" height="20" viewBox="0 0 20 20"><path fill="currentColor" stroke="currentColor" stroke-linejoin="round" d="m10 1.200 2.600 6h6.300l-5 4.300 1.800 7L10 14.700l-5.700 3.800 1.800-7-5-4.300h6.300Z"/></svg>
                    Todos os produtos disponí…
                </button>
                <button class="quick-btn">
                    <svg width="20" height="20" viewBox="0 0 20 20"><path fill="currentColor" d="M7 2h6l1.500 2.500H17A3 3 0 0 1 20 7.500V16a2.500 2.500 0 0 1-2.500 2.500h-15A2.500 2.500 0 0 1 0 16V7.500a3 3 0 0 1 3-3h2.500Z"/><circle cx="10" cy="11" r="4.400" fill="none" stroke="#f0f0f0" stroke-width="1.400"/></svg>
                    VIDEO APRESENTAÇÃO
                </button>
                <button class="quick-btn">
                    <svg width="20" height="22" viewBox="0 0 20 22"><rect x="6" y="0" width="8" height="15" rx="4" fill="currentColor"/><path fill="none" stroke="currentColor" stroke-width="1.500" d="M4 9v3.500a6 6 0 0 0 12 0V9M10 18.500V21M6 21.200h8"/></svg>
                    REATIVAÇÃO
                </button>
                <button class="quick-next" aria-label="Próximo">
                    <svg width="9" height="16" viewBox="0 0 9 16" fill="none" stroke="currentColor" stroke-width="1.500"><path d="m1 1 7 7-7 7"/></svg>
                </button>
            </div>
        </main>
    </div>

    <section class="popover" role="dialog" aria-labelledby="popover-title">
        <div class="popover-head">
            <h2 id="popover-title">Iniciar conversa</h2>
            <button class="close" aria-label="Fechar">
                <svg width="14" height="14" viewBox="0 0 14 14" stroke="currentColor" stroke-width="1.300"><path d="m.8.800 12.400 12.400M13.200.8.800 13.200"/></svg>
            </button>
        </div>
        <form class="popover-form" id="start-form">
            <label for="country">Código do país (ex: +55)</label>
            <select id="country" class="field field-select">
                <option>(+55) Brasil</option>
            </select>
            <label for="phone">Número de celular (WhatsApp)</label>
            <div class="field-wrap">
                <input id="phone" class="field field-focus" type="text" value="+55 11 97190-7976">
                <span class="caret"></span>
            </div>
            <div class="preview">
                <div class="preview-label"><span class="preview-dot"></span>PREVIEW DO NÚMERO</div>
                <div class="preview-number">
                    <strong>+55 (55)11971-9079</strong>
                    <span class="pill">WhatsApp</span>
                </div>
            </div>
        </form>
        <div class="popover-foot">
            <div class="spotlight">
                <button class="start" type="submit" form="start-form">Iniciar conversa</button>
            </div>
        </div>
    </section>

    <div class="overlay"></div>
</body>
</html>
```
FILE: styles.css
```css
* {
    box-sizing: border-box;
}

body {
    position: relative;
    display: flex;
    flex-direction: column;
    height: 100vh;
    margin: 0;
    padding-bottom: 1px;
    overflow: hidden;
    background: #fff;
    color: #111;
    font-family: "Liberation Sans", Arial, sans-serif;
    font-size: 16px;
}

button {
    display: flex;
    align-items: center;
    justify-content: center;
    padding: 0;
    border: none;
    background: none;
    color: inherit;
    font: inherit;
    cursor: pointer;
}

svg {
    flex: none;
}

.defs {
    position: absolute;
    width: 0;
    height: 0;
}

/* Top bar */
.topbar {
    display: flex;
    align-items: center;
    flex: none;
    height: 82px;
    padding: 0 15px 0 27px;
    border-bottom: 1px solid #e2e2e2;
}

.brand {
    display: flex;
    align-items: center;
    margin-right: 10px;
}

.brand-check {
    margin: 0 7px 8px 0;
}

.brand-name {
    font-family: Roboto, sans-serif;
    font-size: 34px;
    font-weight: 500;
    line-height: 40px;
}

.brand-dot {
    width: 8px;
    height: 8px;
    margin: 14px 0 0 1px;
    border-radius: 50%;
    background: linear-gradient(#ff5a50, #e0006e);
}

.divider {
    flex: none;
    width: 1px;
    height: 36px;
    background: #dedede;
}

.tool {
    flex: none;
    width: 45px;
    height: 45px;
    border-radius: 10px;
    color: #666;
}

.tool-active {
    background: #f4f4f4;
}

.tool-dark {
    color: #000;
}

.topbar > .tool {
    margin-left: 9px;
}

.tools {
    display: flex;
    align-items: center;
    gap: 9px;
    margin-left: auto;
}

.account {
    gap: 18px;
    padding: 0 14px 0 6px;
    color: #555;
}

.avatar {
    display: flex;
    align-items: center;
    justify-content: center;
    flex: none;
    width: 45px;
    height: 45px;
    border-radius: 50%;
    background: #1c1c1c;
}

.avatar-sm {
    width: 37px;
    height: 37px;
}

/* Left rail */
.app {
    display: flex;
    flex: 1;
    min-height: 0;
}

.rail {
    display: flex;
    flex-direction: column;
    align-items: center;
    flex: none;
    gap: 4px;
    width: 73px;
    padding: 12px 0 9px;
    border-right: 1px solid #dedcd9;
    background: #f7f5f3;
    color: #636261;
}

.rail-btn {
    position: relative;
    flex: none;
    width: 45px;
    height: 45px;
    border-radius: 50%;
}

.rail-current {
    background: #eae8e6;
}

.rail-me {
    background: #fff;
}

.rail-sep {
    width: 45px;
    margin: 8px 0 7px;
    border: none;
    border-top: 1px solid #dedcd9;
}

.rail-end {
    margin-top: auto;
}

.badge {
    position: absolute;
    top: -6px;
    right: -5px;
    width: 23px;
    height: 23px;
    border-radius: 50%;
    background: #1daa61;
    color: #fff;
    font-family: "Open Sans", sans-serif;
    font-size: 13px;
    font-weight: 600;
    line-height: 23px;
}

.dot {
    position: absolute;
    top: 0;
    right: 3px;
    width: 9px;
    height: 9px;
    border-radius: 50%;
    background: #1daa61;
}

/* Chat list panel */
.panel {
    display: flex;
    flex-direction: column;
    flex: none;
    width: 576px;
    border-right: 2px solid #d9d7d5;
    font-family: "Open Sans", "Segoe UI", sans-serif;
}

.panel-head {
    display: flex;
    align-items: center;
    gap: 12px;
    height: 70px;
    padding: 0 21px 2px 23px;
}

.panel-head h1 {
    flex: 1;
    margin: 0;
    color: #1daa61;
    font-family: Inter, sans-serif;
    font-size: 23px;
    font-weight: 600;
}

.icon-btn {
    flex: none;
    width: 45px;
    height: 45px;
    color: #0a0a0a;
}

.search {
    display: flex;
    align-items: center;
    gap: 17px;
    height: 45px;
    margin: 0 22px 0 23px;
    padding: 0 18px;
    border-radius: 23px;
    background: #f3f3f3;
    color: #636261;
}

.search input,
.composer input {
    flex: 1;
    min-width: 0;
    padding: 0;
    border: none;
    outline: none;
    background: none;
    font-family: "Open Sans", "Segoe UI", sans-serif;
    font-size: 16px;
}

.search input::placeholder,
.composer input::placeholder {
    color: #636261;
    opacity: 1;
}

.filters {
    display: flex;
    gap: 9px;
    padding: 12px 23px;
}

.chip {
    height: 36px;
    padding: 0 12px;
    border: 1px solid #cfcecc;
    border-radius: 18px;
    color: #636261;
    font-size: 16px;
}

.chip-on {
    border-color: #a9cda2;
    background: #d9fdd3;
    color: #15603e;
}

.chat-list {
    display: flex;
    flex-direction: column;
    align-items: flex-end;
    flex: 1;
    gap: 5px;
    padding-right: 2px;
}

.thumb {
    width: 7px;
    height: 227px;
    border-radius: 4px;
    background: #c4c4c4;
}

.arrow-up,
.arrow-down {
    width: 0;
    height: 0;
    border: 4px solid transparent;
}

.arrow-up {
    border-top: none;
    border-bottom: 6px solid #b4b4b4;
}

.arrow-down {
    border-bottom: none;
    border-top: 6px solid #b4b4b4;
}

.get-app {
    display: flex;
    align-items: center;
    justify-content: center;
    gap: 8px;
    height: 67px;
    padding-top: 8px;
    padding-right: 31px;
    border-top: 1px solid #d9d7d5;
    color: #1b7a58;
    font-size: 18px;
    text-decoration: none;
}

/* Conversation */
.chat {
    display: flex;
    flex-direction: column;
    flex: 1;
    min-width: 0;
}

.chat-head {
    display: flex;
    align-items: center;
    flex: none;
    gap: 12px;
    height: 70px;
    padding: 0 14px 4px 18px;
}

.chat-name {
    flex: 1;
    margin-left: 5px;
    font-family: "Open Sans", "Segoe UI", sans-serif;
}

.contact {
    height: 36px;
    margin-right: 33px;
    padding: 0 11px;
    border-radius: 8px;
    background: linear-gradient(90deg, #ef4444, #db2777);
    box-shadow: 0 0 0 4px #f3f1f1;
    color: #fff;
    font-size: 15px;
}

.video {
    gap: 9px;
    width: 64px;
}

.thread {
    position: relative;
    display: flex;
    flex-direction: column;
    flex: 1;
    min-height: 0;
    padding: 4px 9px 15px 14px;
    background: #f5f1eb;
    box-shadow: inset 0 5px 4px -3px rgba(0, 0, 0, 0.15);
}

.wallpaper {
    position: absolute;
    inset: 0;
    width: 100%;
    height: 100%;
}

.messages {
    position: relative;
    display: flex;
    flex-direction: column;
    align-items: center;
    flex: 1;
    min-height: 0;
    padding: 0 13px 4px 0;
}

.messages .arrow-up,
.messages .arrow-down {
    align-self: flex-end;
    margin-right: -22px;
}

.messages .arrow-up {
    margin-bottom: auto;
}

.day {
    padding: 0 14px;
    border-radius: 8px;
    background: #fff;
    box-shadow: 0 1px 1px rgba(0, 0, 0, 0.15);
    color: #555;
    font-family: "Open Sans", "Segoe UI", sans-serif;
    font-size: 13px;
    line-height: 27px;
}

.notice {
    max-width: 539px;
    margin: 14px 0;
    padding: 6px 14px 5px;
    border-radius: 8px;
    background: #fff0d4;
    box-shadow: 0 1px 1px rgba(0, 0, 0, 0.15);
    color: #4a4a48;
    font-family: "Open Sans", "Segoe UI", sans-serif;
    font-size: 13px;
    line-height: 24px;
    text-align: center;
}

.notice svg {
    margin-right: 2px;
    vertical-align: -1px;
}

.composer {
    position: relative;
    display: flex;
    align-items: center;
    flex: none;
    height: 58px;
    padding: 0 8px 0 5px;
    border-radius: 29px;
    background: #fff;
    box-shadow: 0 1px 4px rgba(0, 0, 0, 0.2);
}

.composer input {
    margin-left: 8px;
}

/* Quick replies */
.quick {
    position: relative;
    display: flex;
    align-items: center;
    flex: none;
    gap: 18px;
    height: 62px;
    padding: 6px 0 0 19px;
    overflow: hidden;
}

.quick-btn {
    flex: none;
    gap: 19px;
    height: 40px;
    padding: 0 22px 0 23px;
    border-radius: 12px;
    background: #f3f3f3;
    color: #555;
    white-space: nowrap;
}

.quick-next {
    position: absolute;
    right: 5px;
    bottom: 7px;
    width: 45px;
    height: 45px;
    border-radius: 8px;
    background: linear-gradient(90deg, #ef4444, #db2777);
    color: #fff;
}

/* Start conversation popover */
.popover {
    position: absolute;
    top: 73px;
    right: 284px;
    width: 449px;
    border: 1px solid #e6e6e6;
    border-radius: 14px;
    background: #fff;
}

.popover-head {
    display: flex;
    align-items: center;
    justify-content: space-between;
    height: 54px;
    padding: 0 29px 0 17px;
    border-bottom: 1px solid #e2e2e2;
}

.popover-head h2 {
    margin: 0;
    color: #444;
    font-size: 18px;
}

.close {
    color: #777;
}

.popover-form {
    padding: 14px 18px 18px 17px;
}

.popover-form label {
    display: block;
    margin-bottom: 10px;
    color: #444;
    font-weight: bold;
    line-height: 21px;
}

.field {
    display: block;
    width: 100%;
    height: 45px;
    margin-bottom: 18px;
    padding: 0 18px;
    border: 1px solid #dedede;
    border-radius: 13px;
    outline: none;
    background: #fff;
    color: #444;
    font: inherit;
}

.field-select {
    appearance: none;
    background: #fff url("data:image/svg+xml,%3Csvg xmlns='http://www.w3.org/2000/svg' width='16' height='10' fill='none' stroke='%23333' stroke-width='1.600'%3E%3Cpath d='m1 1 7 7 7-7'/%3E%3C/svg%3E") no-repeat right 16px center;
}

.field-wrap {
    position: relative;
}

.field-focus {
    box-shadow: 0 0 0 3px #f6d3dd;
}

.caret {
    position: absolute;
    top: 13px;
    left: 156px;
    width: 1px;
    height: 17px;
    background: #000;
}

.preview {
    margin-top: 19px;
    padding: 13px 14px 15px;
    border-radius: 9px;
    background: #f5f5f5;
}

.preview-label {
    display: flex;
    align-items: center;
    gap: 9px;
    color: #777;
    font-size: 14px;
    line-height: 18px;
}

.preview-dot {
    width: 9px;
    height: 9px;
    border-radius: 50%;
    background: #22c55e;
}

.preview-number {
    display: flex;
    align-items: center;
    gap: 10px;
    margin-top: 12px;
    color: #3c3c3c;
}

.preview-number strong {
    font-family: "DejaVu Sans Mono", monospace;
    font-size: 20px;
}

.pill {
    padding: 0 9px;
    border-radius: 14px;
    background: #dcfce7;
    color: #15803d;
    font-size: 14px;
    line-height: 27px;
}

.popover-foot {
    padding: 8px 13px 8px 12px;
    border-top: 1px solid #dadada;
}

.spotlight {
    position: relative;
    z-index: 20;
    padding: 6px 5px 5px;
    border-radius: 9px;
    background: #fff;
}

.start {
    width: 100%;
    height: 45px;
    border-radius: 9px;
    background: linear-gradient(90deg, #ef4444, #db2777);
    color: #fff;
}

.overlay {
    position: fixed;
    inset: 0 0 1px;
    z-index: 10;
    background: rgba(0, 0, 0, 0.5);
    pointer-events: none;
}
```
